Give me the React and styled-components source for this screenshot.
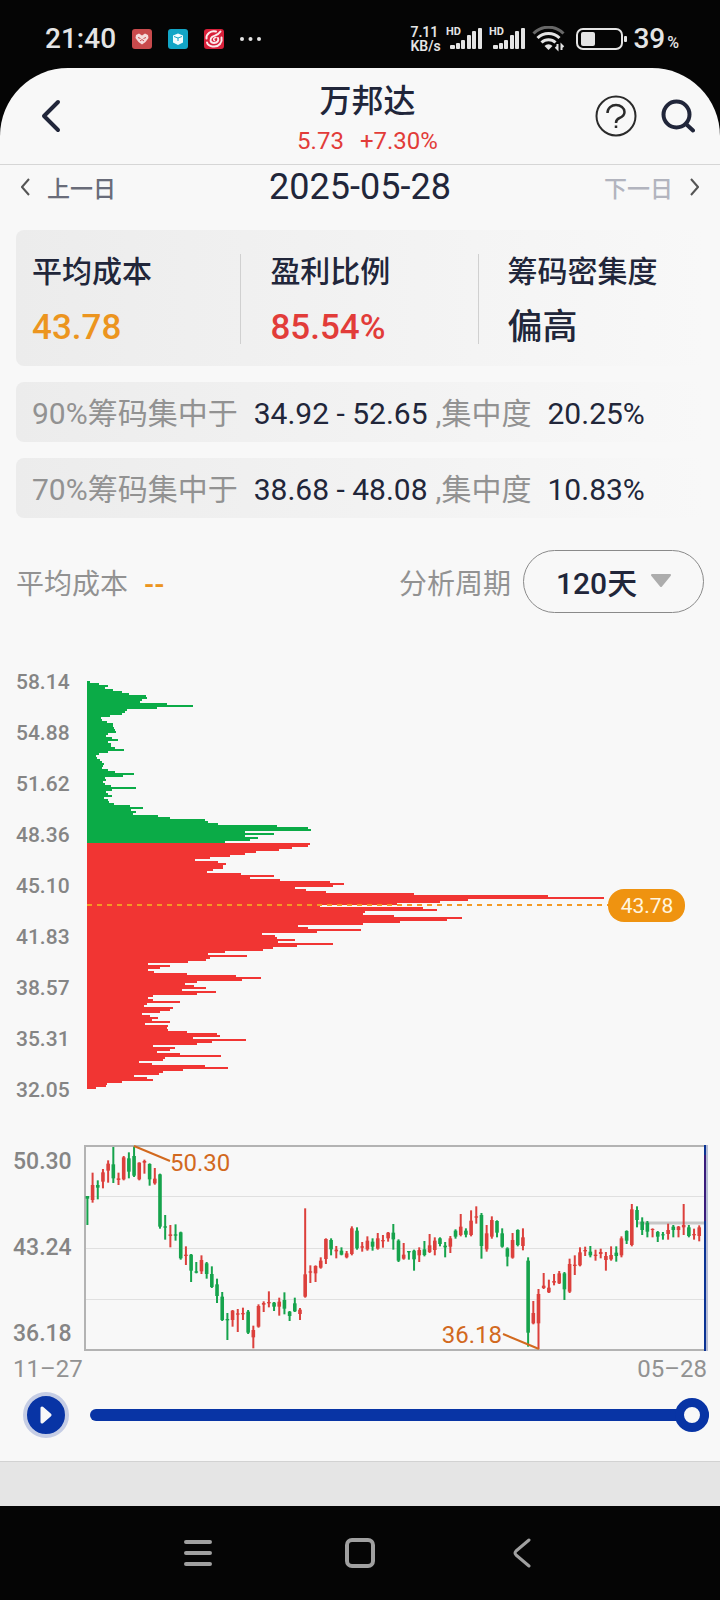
import React, { useState } from "react";
import styled, { createGlobalStyle } from "styled-components";

const GlobalStyle = createGlobalStyle`
    * {
        box-sizing: border-box;
    }
    body {
        margin: 0;
        background: #050505;
        font-family: Roboto, "Noto Sans CJK SC", sans-serif;
        color: #21263a;
    }
    button {
        padding: 0;
        border: 0;
        background: none;
        color: inherit;
        font: inherit;
        cursor: pointer;
    }
    svg {
        display: block;
    }
`

const Phone = styled.div`
    display: flex;
    flex-direction: column;
    min-height: 100vh;
    background: #050505;
`

/* ---------- status bar ---------- */

const StatusBar = styled.div`
    display: flex;
    justify-content: space-between;
    align-items: center;
    height: 68px;
    padding: 10px 41px 0 45px;
    color: #e4e4e4;
`

const StatusGroup = styled.div`
    display: flex;
    align-items: center;
    gap: ${props => props.$gap}px;
`

const Clock = styled.span`
    font-size: 28px;
    line-height: 32px;
    font-weight: 500;
`

const NetSpeed = styled.span`
    width: 30px;
    font-size: 14px;
    line-height: 14px;
    font-weight: 600;
    white-space: nowrap;
`

const Battery = styled.span`
    display: flex;
    align-items: baseline;
    font-size: 28px;
    line-height: 32px;
    font-weight: 500;
`

const Percent = styled.small`
    margin-left: 2px;
    font-size: 16px;
    line-height: 16px;
`

/* ---------- app ---------- */

const Screen = styled.main`
    flex: 1;
    display: flex;
    flex-direction: column;
    overflow: hidden;
    border-radius: 68px 68px 0 0;
    background: #f8f8f8;
`

const Header = styled.header`
    display: grid;
    grid-template-columns: 1fr auto 1fr;
    align-items: center;
    height: 97px;
    padding: 0 25px 0 40px;
    border-bottom: 1px solid #d6d6d6;
`

const BackButton = styled.button`
    justify-self: start;
`

const TitleBlock = styled.div`
    display: flex;
    flex-direction: column;
    align-items: center;
    gap: 8px;
    padding-top: 10px;
`

const Title = styled.h1`
    margin: 0;
    font-size: 32px;
    line-height: 32px;
    font-weight: 500;
`

const Quote = styled.div`
    display: flex;
    gap: 16px;
    color: #e23c39;
    font-size: 24px;
    line-height: 32px;
`

const HeaderActions = styled.div`
    justify-self: end;
    display: flex;
    align-items: center;
    gap: 24px;
`

const DateBar = styled.nav`
    display: grid;
    grid-template-columns: 1fr auto 1fr;
    align-items: center;
    height: 44px;
    padding: 0 21px;
`

const DayButton = styled.button`
    justify-self: ${props => (props.$next ? "end" : "start")};
    display: flex;
    align-items: center;
    gap: 17px;
    font-size: 23px;
    line-height: 32px;
    font-weight: 500;
    color: ${props => (props.$next ? "#b2b4be" : "#696c79")};
`

const DayLabel = styled.span`
    padding-top: 6px;
`

const CurrentDate = styled.time`
    font-size: 36px;
    line-height: 44px;
`

const Panels = styled.section`
    display: flex;
    flex-direction: column;
    gap: 16px;
    padding: 21px 16px 0;
`

const SummaryCard = styled.div`
    display: grid;
    grid-template-columns: 19fr 20fr 19fr;
    padding: 24px 0 22px;
    border-radius: 8px;
    background: linear-gradient(90deg, #ececec, #f8f8f8);
`

const SummaryItem = styled.div`
    display: flex;
    flex-direction: column;
    gap: 24px;
    padding: 2px 0 0 29px;
    border-right: 1px solid #d0d0d0;

    &:first-child {
        padding-left: 16px;
    }
    &:last-child {
        border-right: 0;
    }
`

const SummaryLabel = styled.span`
    font-size: 30px;
    line-height: 32px;
    font-weight: 500;
`

const SummaryValue = styled.span`
    font-size: 35px;
    line-height: 32px;
    font-weight: 500;
    color: ${props => props.$color || "inherit"};
`

const RangeRow = styled.div`
    display: flex;
    align-items: center;
    height: 60px;
    padding: 4px 16px 0;
    border-radius: 8px;
    background: linear-gradient(90deg, #ececec, #f8f8f8);
    color: #929292;
    font-size: 30px;
    line-height: 32px;
    white-space: pre;
`

const RangeValue = styled.span`
    margin: 0 8px 0 16px;
    color: #21263a;
`

const FilterBar = styled.div`
    display: flex;
    align-items: center;
    padding: 32px 16px 0;
    font-size: 28px;
    line-height: 32px;
`

const FilterLabel = styled.label`
    padding-top: 6px;
    color: #929292;
`

const AverageValue = styled.output`
    flex: 1;
    padding-top: 6px;
    margin-left: 16px;
    color: #ec951f;
    font-weight: 600;
`

const PeriodWrapper = styled.div`
    position: relative;
    margin-left: 12px;
`

const PeriodSelect = styled.select`
    appearance: none;
    display: block;
    width: 181px;
    height: 63px;
    padding: 4px 32px 0;
    border: 1px solid #8a8a8a;
    border-radius: 32px;
    background: none;
    color: #21263a;
    font-family: inherit;
    font-size: 30px;
    font-weight: 500;
`

const PeriodArrow = styled.svg`
    position: absolute;
    top: 24px;
    right: 32px;
    pointer-events: none;
`

/* ---------- charts ---------- */

const ChipChart = styled.section`
    display: grid;
    grid-template-columns: 71px 1fr;
    padding: 57px 16px 0;
`

const TrendChart = styled.section`
    display: grid;
    grid-template-columns: 71px 1fr;
    padding: 43px 12px 0 13px;
`

const Axis = styled.div`
    display: flex;
    flex-direction: column;
    justify-content: space-between;
    padding: ${props => props.$pad}px 0;
    color: #858585;
    font-size: ${props => props.$size}px;
    line-height: 24px;
    font-weight: 500;
`

const Drawing = styled.svg`
    width: 100%;
    height: auto;
    overflow: visible;
`

const TrendDates = styled.div`
    display: flex;
    justify-content: space-between;
    padding: 6px 13px 0 13px;
    color: #929292;
    font-size: 24px;
    line-height: 24px;
`

const Player = styled.div`
    display: flex;
    align-items: center;
    gap: 21px;
    padding: 11px 11px 23px 23px;
`

const PlayButton = styled.button`
    display: flex;
    justify-content: center;
    align-items: center;
    width: 46px;
    height: 46px;
    border: 4px solid #c5cde5;
    border-radius: 50%;
    background: #0834a5;
`

const Slider = styled.input`
    appearance: none;
    flex: 1;
    height: 34px;
    margin: 0;
    background: none;

    &::-webkit-slider-runnable-track {
        height: 12px;
        border-radius: 6px;
        background: linear-gradient(90deg, #0834a5 ${props => props.$filled}%, #c5cde5 0);
    }
    &::-webkit-slider-thumb {
        appearance: none;
        width: 34px;
        height: 34px;
        margin-top: -11px;
        border: 9px solid #0834a5;
        border-radius: 50%;
        background: #f8f8f8;
    }
`

const BottomStrip = styled.div`
    flex: 1;
    min-height: 45px;
    border-top: 1px solid #d2d2d2;
    background: #e5e5e5;
`

const SystemNav = styled.nav`
    display: flex;
    justify-content: center;
    align-items: center;
    gap: 114px;
    height: 94px;
`

const NavButton = styled.button`
    display: flex;
    justify-content: center;
    align-items: center;
    width: 48px;
    height: 48px;
`

/* ---------- data ---------- */

const chipPrices = ["58.14", "54.88", "51.62", "48.36", "45.10", "41.83", "38.57", "35.31", "32.05"]

// bar lengths from the highest price down, one bar every 2px
const lossBars = [
    3, 12, 21, 18, 26, 35, 42, 59, 60, 55, 53, 80, 106, 70, 40, 38, 35, 23, 14, 15,
    20, 26, 26, 27, 28, 29, 21, 19, 25, 31, 21, 24, 24, 28, 37, 21, 12, 9, 10, 13,
    15, 17, 16, 15, 21, 28, 47, 36, 18, 19, 16, 18, 24, 49, 25, 19, 21, 25, 17, 21,
    22, 27, 43, 56, 44, 49, 46, 71, 83, 118, 121, 131, 190, 221, 224, 158, 187, 158, 171, 163, 138,
]
const profitBars = [
    223, 221, 205, 192, 169, 158, 143, 123, 108, 131, 139, 136, 136, 126, 120, 154, 187, 163, 193, 243,
    257, 246, 208, 219, 239, 327, 461, 517, 381, 353, 310, 233, 336, 350, 278, 276, 307, 375, 360, 313,
    276, 211, 221, 274, 230, 175, 188, 190, 208, 191, 246, 210, 186, 176, 138, 121, 160, 123, 119, 101,
    61, 83, 73, 61, 67, 100, 149, 174, 155, 110, 98, 107, 119, 95, 129, 110, 66, 61, 66, 93,
    60, 57, 86, 83, 73, 55, 63, 71, 65, 83, 58, 81, 80, 81, 100, 130, 133, 106, 159, 125,
    110, 66, 88, 83, 70, 93, 134, 78, 76, 52, 65, 118, 141, 96, 76, 72, 47, 60, 66, 35,
    20, 19, 9,
]

// [up, high, low, body top, body bottom], three units to a pixel
const candles = [
    [0, 198, 285, 198, 206], [1, 128, 218, 165, 210], [0, 151, 208, 165, 173], [1, 117, 175, 127, 155],
    [1, 91, 158, 101, 122], [0, 51, 159, 103, 145], [1, 128, 165, 145, 150], [1, 78, 151, 82, 148],
    [0, 67, 145, 85, 125], [0, 50, 141, 78, 137], [1, 97, 151, 98, 148], [1, 89, 131, 93, 98],
    [0, 100, 167, 102, 148], [1, 114, 164, 146, 160], [0, 131, 296, 133, 290], [0, 255, 329, 289, 293],
    [1, 285, 352, 313, 318], [0, 283, 332, 313, 317], [0, 305, 389, 307, 385], [1, 349, 405, 374, 378],
    [0, 372, 456, 374, 422], [0, 396, 430, 424, 428], [1, 376, 432, 390, 424], [0, 396, 446, 400, 432],
    [0, 409, 474, 432, 471], [0, 446, 519, 463, 498], [0, 486, 573, 500, 570], [0, 549, 630, 567, 571],
    [1, 540, 590, 542, 570], [1, 537, 606, 550, 554], [1, 533, 570, 549, 553], [0, 540, 612, 545, 608],
    [1, 587, 655, 600, 622], [1, 523, 593, 528, 590], [1, 514, 546, 519, 524], [1, 484, 532, 516, 520],
    [0, 516, 543, 518, 530], [1, 503, 557, 515, 530], [0, 487, 553, 510, 536], [0, 543, 573, 545, 558],
    [0, 503, 546, 520, 544], [1, 534, 570, 539, 552], [1, 235, 503, 433, 500], [1, 406, 459, 424, 428],
    [1, 406, 456, 408, 430], [1, 382, 416, 392, 413], [1, 325, 402, 327, 387], [0, 325, 376, 330, 358],
    [1, 348, 385, 359, 364], [0, 352, 376, 362, 374], [1, 363, 385, 370, 382], [1, 289, 376, 295, 372],
    [0, 292, 359, 302, 355], [1, 336, 365, 349, 353], [1, 319, 362, 332, 358], [0, 325, 362, 335, 350],
    [1, 309, 359, 325, 356], [1, 315, 353, 330, 334], [1, 306, 335, 308, 325], [0, 282, 359, 308, 328],
    [0, 328, 396, 332, 392], [1, 339, 389, 374, 386], [0, 363, 389, 363, 367], [0, 359, 422, 362, 388],
    [1, 352, 396, 360, 376], [0, 333, 379, 358, 375], [1, 312, 369, 346, 366], [1, 322, 376, 332, 360],
    [0, 322, 349, 325, 342], [0, 336, 382, 347, 352], [1, 318, 369, 325, 350], [0, 298, 326, 302, 320],
    [1, 252, 319, 290, 315], [0, 295, 322, 302, 314], [1, 241, 319, 272, 315], [1, 229, 281, 259, 263],
    [0, 249, 386, 255, 348], [1, 285, 365, 310, 358], [1, 259, 326, 270, 320], [0, 271, 322, 273, 308],
    [0, 295, 353, 310, 350], [0, 352, 409, 355, 380], [1, 309, 386, 330, 383], [0, 298, 349, 300, 345],
    [1, 295, 361, 322, 348], [0, 382, 650, 392, 608], [1, 513, 583, 549, 580], [1, 477, 657, 492, 580],
    [1, 429, 477, 467, 474], [1, 449, 489, 473, 487], [1, 432, 466, 453, 458], [1, 423, 462, 430, 460],
    [0, 426, 510, 430, 478], [1, 386, 489, 402, 485], [1, 376, 435, 404, 408], [1, 352, 409, 367, 406],
    [1, 350, 378, 360, 364], [0, 348, 382, 365, 376], [1, 359, 392, 374, 378], [1, 356, 385, 366, 372],
    [1, 366, 422, 378, 390], [1, 349, 392, 375, 388], [0, 349, 395, 368, 378], [1, 319, 382, 325, 376],
    [0, 301, 342, 303, 332], [1, 222, 349, 238, 345], [0, 229, 292, 240, 270], [0, 262, 315, 275, 300],
    [0, 273, 322, 278, 305], [1, 295, 322, 297, 300], [0, 303, 336, 306, 320], [0, 306, 329, 313, 316],
    [1, 281, 329, 300, 312], [0, 285, 322, 290, 300], [1, 288, 322, 290, 300], [1, 222, 315, 285, 292],
    [0, 285, 322, 292, 318], [1, 296, 329, 312, 316], [1, 286, 334, 292, 318],
]

const candleX = (i) => 3.4 + i * 5.185
const candleY = (v) => (v - 45) / 3

const barsPath = (bars, top) =>
    `M0 ${top}` + bars.map((len, i) => `H${len}V${top + (i + 1) * 2}`).join("") + "H0Z"

/* ---------- parts ---------- */

function Signal() {
    return (
        <svg width="37" height="26" viewBox="0 0 37 26" fill="#e4e4e4">
            <text x="0" y="9" fontSize="11" fontWeight="700">HD</text>
            <rect x="4" y="19" width="5" height="4" rx="1" />
            <rect x="10" y="17" width="4" height="6" rx="1" />
            <rect x="15" y="14" width="4" height="9" rx="1" />
            <rect x="21" y="9" width="4" height="14" rx="1" />
            <rect x="26" y="5" width="4" height="18" rx="1" />
            <rect x="32" y="2" width="4" height="21" rx="1" />
        </svg>
    )
}

function StatusIcons() {
    return (
        <>
            <svg width="20" height="20" viewBox="0 0 20 20">
                <rect width="20" height="20" rx="3" fill="#c84a4c" />
                <path d="M4 6l3-1.500 3 2 3-2L16 6l.5 3-3 4-3.500 2.500L6.500 13l-3-4z" fill="#f4dcdc" />
                <path d="M6 8.500l2.500 1M14 8.500l-2.500 1M8 12l2-1.500 2 1.500" stroke="#c84a4c" fill="none" />
            </svg>
            <svg width="20" height="20" viewBox="0 0 20 20">
                <rect width="20" height="20" rx="3" fill="#12a5c6" />
                <path d="M10 4.500l5 2v7l-5 2.500-5-2.500v-7z" fill="#f2fbfd" />
                <path d="M6 7.500l4 1.500 4-1.500M10 9v3" stroke="#12a5c6" fill="none" />
            </svg>
            <svg width="20" height="20" viewBox="0 0 20 20">
                <rect width="20" height="20" rx="3" fill="#d8203a" />
                <g fill="none" stroke="#fbe9eb" strokeLinecap="round">
                    <path d="M12 2.500C7 1 2 5 2.500 9.500" strokeWidth="2" />
                    <path d="M16.500 2.500C13.500 7 11 6 8 8c-2.500 2-2 6 2 6 3.500 0 5-2.500 4-5" strokeWidth="2" />
                    <path d="M3 13.500c1 4 9 6 13 1.500 1.500-2 2-4.500 1.500-6.500" strokeWidth="2" />
                    <path d="M12 8.500c-2.500 0-3 2.500-1.500 3" strokeWidth="1.500" />
                </g>
            </svg>
            <svg width="22" height="20" viewBox="0 0 22 20" fill="#e4e4e4">
                <circle cx="2" cy="10" r="2" />
                <circle cx="10.500" cy="10" r="2" />
                <circle cx="19" cy="10" r="2" />
            </svg>
        </>
    )
}

function Wifi() {
    return (
        <svg width="33" height="26" viewBox="0 0 33 26" fill="none" strokeWidth="3">
            <path d="M1.500 7.500a21 21 0 0 1 30 0" stroke="#686868" />
            <path d="M5.500 12a15.500 15.500 0 0 1 22 0" stroke="#e4e4e4" />
            <path d="M9.500 16.500a10 10 0 0 1 14 0" stroke="#e4e4e4" />
            <path d="M12.500 20a5.500 5.500 0 0 1 8 0l-4 4z" fill="#e4e4e4" />
            <path d="M25.500 18v5l-2-2M29.500 24v-5l2 2" stroke="#e4e4e4" strokeWidth="2" />
        </svg>
    )
}

function ChipDistribution() {
    return (
        <ChipChart>
            <Axis $size={21} $pad={0}>
                {chipPrices.map((price) => <span key={price}>{price}</span>)}
            </Axis>
            <Drawing viewBox="0 0 617 432" role="img" aria-label="筹码分布">
                <g shapeRendering="crispEdges">
                    <path d={barsPath(lossBars, 11)} fill="#0bab47" />
                    <path d={barsPath(profitBars, 173)} fill="#f13533" />
                </g>
                <path d="M0 235H522" stroke="#f39a24" strokeWidth="2" strokeDasharray="5 5" />
                <rect x="521" y="219" width="77" height="33" rx="16" fill="#ef9310" />
                <text x="560" y="243" fontSize="21" textAnchor="middle" fill="#fff6e0">43.78</text>
            </Drawing>
        </ChipChart>
    )
}

function Trend() {
    return (
        <>
            <TrendChart>
                <Axis $size={23} $pad={5}>
                    <span>50.30</span>
                    <span>43.24</span>
                    <span>36.18</span>
                </Axis>
                <Drawing viewBox="0 0 624 206" role="img" aria-label="K线走势">
                    <path d="M1 51.500H622M1 103.500H622M1 154.500H622" stroke="#e0e0e0" />
                    <rect x="1" y="1" width="621" height="204" fill="none" stroke="#b3b3b3" strokeWidth="2" />
                    <path d="M553 78H622" stroke="#c6c6c6" strokeWidth="3" />
                    {candles.map(([up, high, low, top, bottom], i) => (
                        <g key={i} fill={up ? "#dc403c" : "#16a34c"}>
                            <rect x={candleX(i) - 1} y={candleY(high)} width="2" height={(low - high) / 3} />
                            <rect x={candleX(i) - 1.8} y={candleY(top)} width="3.600" height={(bottom - top) / 3} />
                        </g>
                    ))}
                    <path d="M50 1L86 16M419 189L455 204" stroke="#d2691e" strokeWidth="2" />
                    <text x="86" y="26" fontSize="24" fill="#d2691e">50.30</text>
                    <text x="418" y="198" fontSize="24" textAnchor="end" fill="#d2691e">36.18</text>
                    <path d="M623 0V206" stroke="#b7bdd4" strokeWidth="2" />
                    <path d="M621 0V206" stroke="#0b3394" strokeWidth="2" />
                    <path d="M621 10V76" stroke="#3a1c7c" strokeWidth="2" />
                </Drawing>
            </TrendChart>
            <TrendDates>
                <span>11–27</span>
                <span>05–28</span>
            </TrendDates>
        </>
    )
}

export default function App() {
    const [period, setPeriod] = useState("120")
    const [day, setDay] = useState(119)

    return (
        <Phone>
            <GlobalStyle />
            <StatusBar>
                <StatusGroup $gap={16}>
                    <Clock>21:40</Clock>
                    <StatusIcons />
                </StatusGroup>
                <StatusGroup $gap={6}>
                    <NetSpeed>7.11<br />KB/s</NetSpeed>
                    <Signal />
                    <Signal />
                    <Wifi />
                    <svg width="56" height="24" viewBox="0 0 56 24">
                        <rect x="6" y="2" width="45" height="20" rx="6" fill="none" stroke="#e4e4e4" strokeWidth="2" />
                        <rect x="10" y="5" width="14" height="14" rx="2" fill="#e4e4e4" />
                        <rect x="53" y="9" width="3" height="6" rx="1" fill="#e4e4e4" />
                    </svg>
                    <Battery>39<Percent>%</Percent></Battery>
                </StatusGroup>
            </StatusBar>

            <Screen>
                <Header>
                    <BackButton aria-label="返回">
                        <svg width="22" height="36" viewBox="0 0 22 36" fill="none" stroke="#21263a" strokeWidth="4" strokeLinecap="round" strokeLinejoin="round">
                            <path d="M18 4L4 18l14 14" />
                        </svg>
                    </BackButton>
                    <TitleBlock>
                        <Title>万邦达</Title>
                        <Quote>
                            <span>5.73</span>
                            <span>+7.30%</span>
                        </Quote>
                    </TitleBlock>
                    <HeaderActions>
                        <button aria-label="帮助">
                            <svg width="42" height="42" viewBox="0 0 42 42" fill="none" stroke="#2b2b2b" strokeWidth="2">
                                <circle cx="21" cy="21" r="19.500" />
                                <path d="M12.500 18c0-5 4-8 8.500-8s8.500 3 8.500 7c0 3.500-2.500 5-5 6-2.500 1-3.500 2-3.500 5" strokeWidth="2.500" />
                                <path d="M21 30.500v2.500" strokeWidth="2.500" />
                            </svg>
                        </button>
                        <button aria-label="搜索">
                            <svg width="34" height="34" viewBox="0 0 34 34" fill="none" stroke="#21263a" strokeWidth="4" strokeLinecap="round">
                                <circle cx="15.500" cy="15.500" r="13" />
                                <path d="M25 25l7 6.500" />
                            </svg>
                        </button>
                    </HeaderActions>
                </Header>

                <DateBar>
                    <DayButton>
                        <svg width="9" height="18" viewBox="0 0 9 18" fill="none" stroke="#555555" strokeWidth="2">
                            <path d="M8 1L1 9l7 8" />
                        </svg>
                        <DayLabel>上一日</DayLabel>
                    </DayButton>
                    <CurrentDate>2025-05-28</CurrentDate>
                    <DayButton $next>
                        <DayLabel>下一日</DayLabel>
                        <svg width="9" height="18" viewBox="0 0 9 18" fill="none" stroke="#555555" strokeWidth="2">
                            <path d="M1 1l7 8-7 8" />
                        </svg>
                    </DayButton>
                </DateBar>

                <Panels>
                    <SummaryCard>
                        <SummaryItem>
                            <SummaryLabel>平均成本</SummaryLabel>
                            <SummaryValue $color="#ec951f">43.78</SummaryValue>
                        </SummaryItem>
                        <SummaryItem>
                            <SummaryLabel>盈利比例</SummaryLabel>
                            <SummaryValue $color="#e23c39">85.54%</SummaryValue>
                        </SummaryItem>
                        <SummaryItem>
                            <SummaryLabel>筹码密集度</SummaryLabel>
                            <SummaryValue>偏高</SummaryValue>
                        </SummaryItem>
                    </SummaryCard>
                    <RangeRow>
                        90%筹码集中于<RangeValue>34.92 - 52.65</RangeValue>,集中度<RangeValue>20.25%</RangeValue>
                    </RangeRow>
                    <RangeRow>
                        70%筹码集中于<RangeValue>38.68 - 48.08</RangeValue>,集中度<RangeValue>10.83%</RangeValue>
                    </RangeRow>
                </Panels>

                <FilterBar>
                    <FilterLabel htmlFor="average">平均成本</FilterLabel>
                    <AverageValue id="average">--</AverageValue>
                    <FilterLabel htmlFor="period">分析周期</FilterLabel>
                    <PeriodWrapper>
                        <PeriodSelect id="period" value={period} onChange={(e) => setPeriod(e.target.value)}>
                            <option value="60">60天</option>
                            <option value="120">120天</option>
                            <option value="250">250天</option>
                        </PeriodSelect>
                        <PeriodArrow width="22" height="14" viewBox="0 0 22 14">
                            <path d="M2 1H20L11 12Z" fill="#adadad" stroke="#adadad" strokeWidth="2" strokeLinejoin="round" />
                        </PeriodArrow>
                    </PeriodWrapper>
                </FilterBar>

                <ChipDistribution />
                <Trend />

                <Player>
                    <PlayButton aria-label="播放">
                        <svg width="12" height="18" viewBox="0 0 12 18">
                            <path d="M2 2V16L10 9Z" fill="#f8f8f8" stroke="#f8f8f8" strokeWidth="3" strokeLinejoin="round" />
                        </svg>
                    </PlayButton>
                    <Slider
                        type="range"
                        aria-label="日期"
                        min="0"
                        max="119"
                        value={day}
                        $filled={(day / 119) * 100}
                        onChange={(e) => setDay(Number(e.target.value))}
                    />
                </Player>
                <BottomStrip />
            </Screen>

            <SystemNav>
                <NavButton aria-label="菜单">
                    <svg width="28" height="28" viewBox="0 0 28 28" stroke="#a0a0a0" strokeWidth="4" strokeLinecap="round">
                        <path d="M2 3H26M2 14H26M2 25H26" />
                    </svg>
                </NavButton>
                <NavButton aria-label="主页">
                    <svg width="30" height="30" viewBox="0 0 30 30">
                        <rect x="2" y="2" width="26" height="26" rx="5" fill="none" stroke="#a0a0a0" strokeWidth="4" />
                    </svg>
                </NavButton>
                <NavButton aria-label="后退">
                    <svg width="20" height="30" viewBox="0 0 20 30" fill="none" stroke="#a0a0a0" strokeWidth="3" strokeLinecap="round" strokeLinejoin="round">
                        <path d="M17 2L4 13q-2 2 0 4L17 28" />
                    </svg>
                </NavButton>
            </SystemNav>
        </Phone>
    )
}
